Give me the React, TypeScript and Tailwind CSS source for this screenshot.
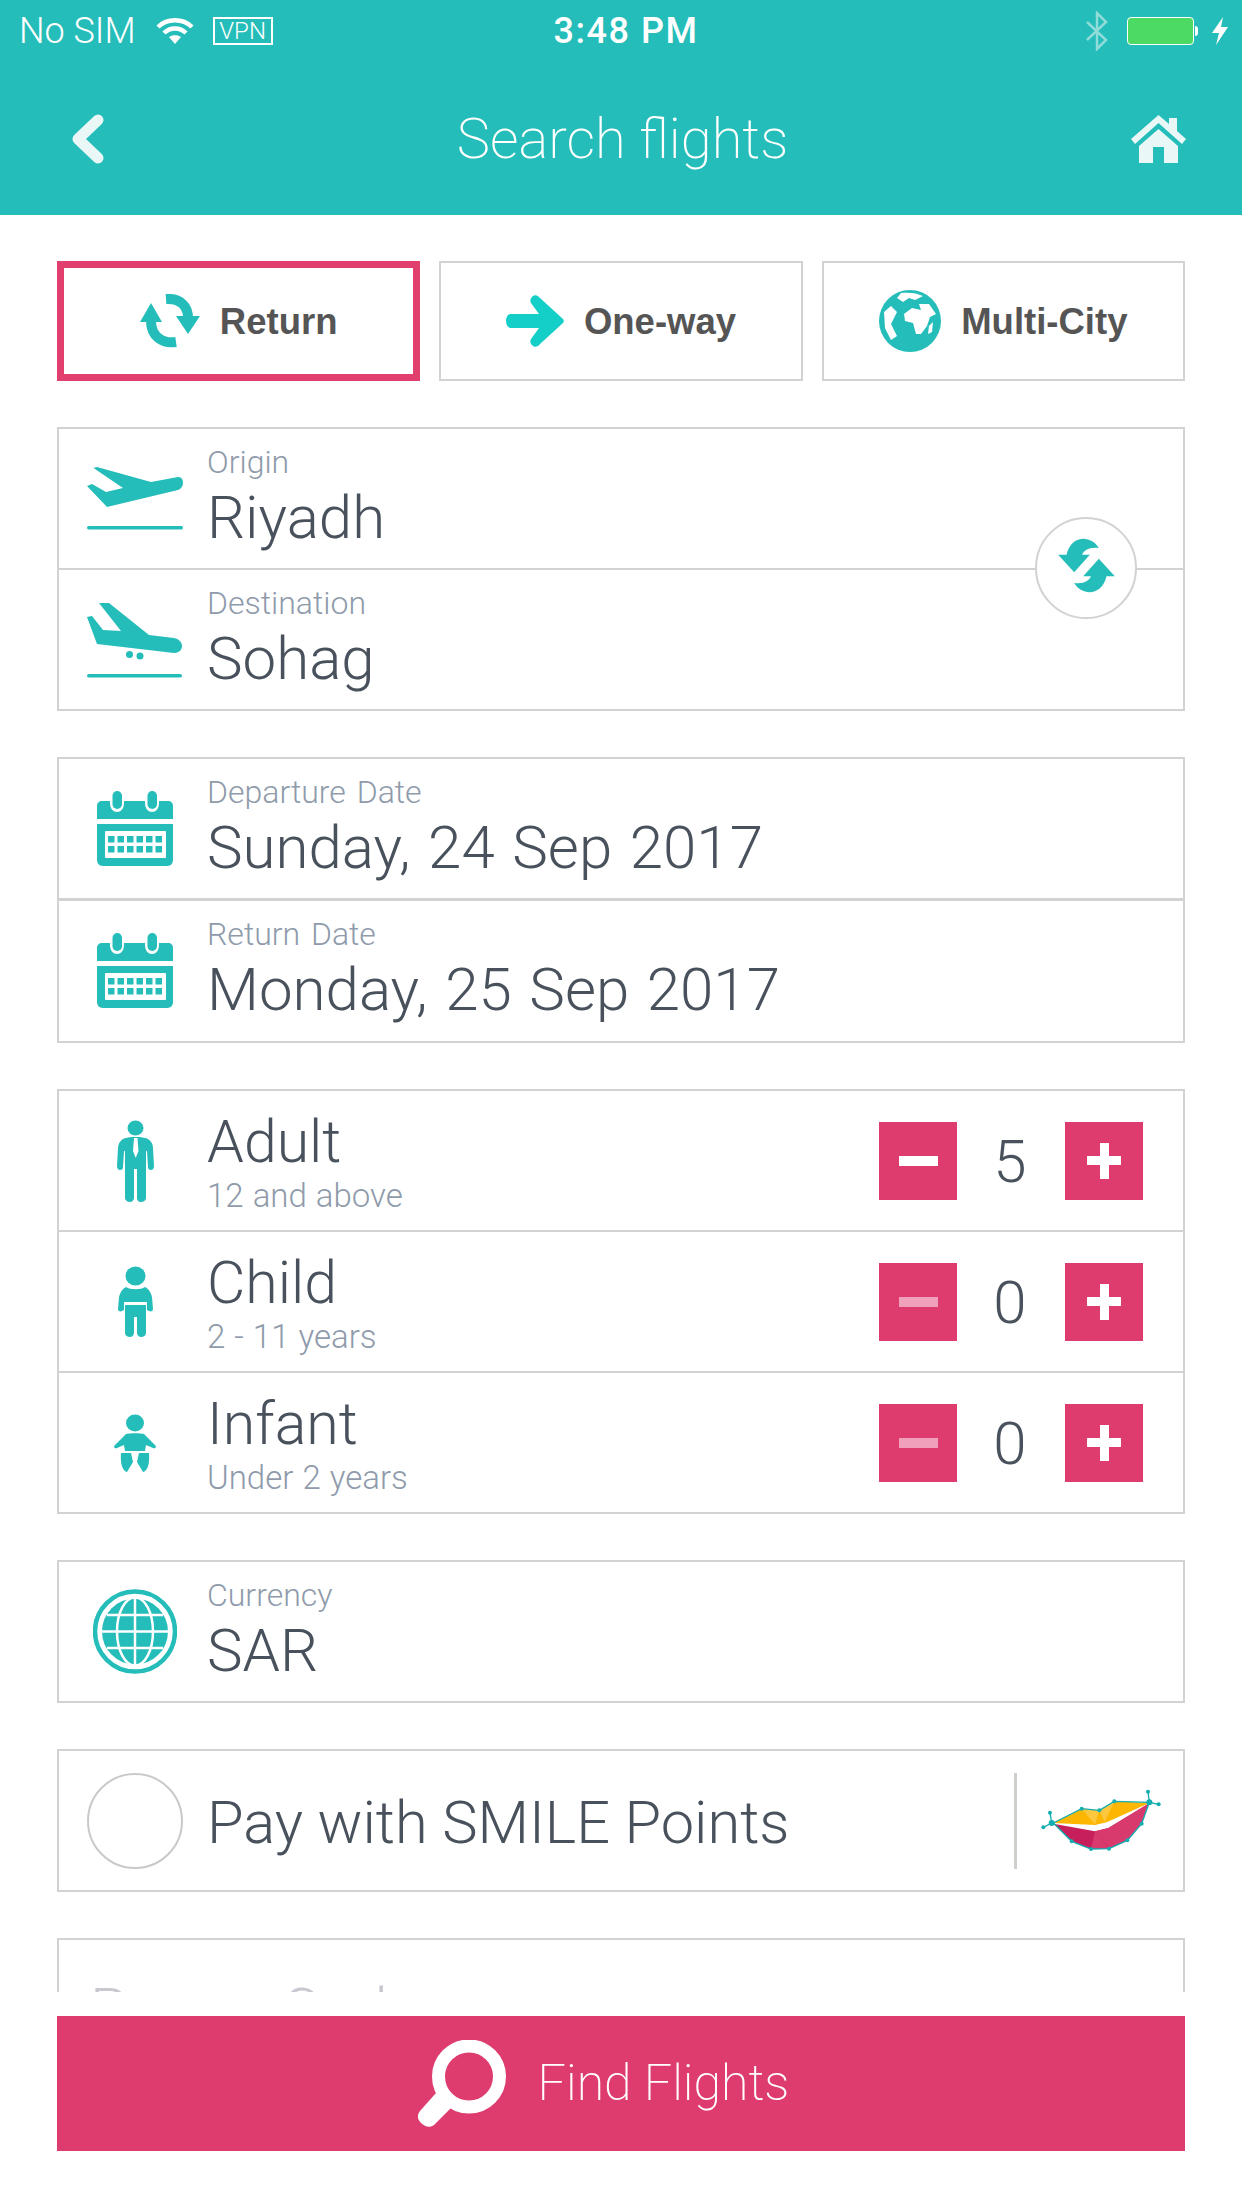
import type { ReactNode } from "react";

const TEAL = "#25bdb9";

function WifiIcon() {
  return (
    <svg width="38" height="28" viewBox="0 0 38 28" fill="none" stroke="#fff" strokeWidth="4.500">
      <path d="M2 10 C11 1 27 1 36 10" />
      <path d="M8 16 C14 10 24 10 30 16" />
      <path d="M19 27 L13 20 C16 17.500 22 17.500 25 20 Z" fill="#fff" stroke="none" />
    </svg>
  );
}

function BluetoothIcon() {
  return (
    <svg width="24" height="40" viewBox="0 0 24 40" fill="none" stroke="#8fdcd9" strokeWidth="2.500">
      <path d="M2 11 L21 29 L12 38 L12 2 L21 11 L2 29" />
    </svg>
  );
}

function BoltIcon() {
  return (
    <svg width="16" height="28" viewBox="0 0 16 28" fill="#fff">
      <path d="M11 0 L0 16 L7 16 L4 28 L16 10 L9 10 Z" />
    </svg>
  );
}

function ChevronIcon() {
  return (
    <svg width="33" height="50" viewBox="0 0 33 50" fill="none" stroke="#e9f8f7" strokeWidth="11" strokeLinecap="round" strokeLinejoin="round">
      <path d="M27 6 L7 25 L27 44" />
    </svg>
  );
}

function HomeIcon() {
  return (
    <svg width="55" height="48" viewBox="0 0 55 48" fill="#e9f8f7">
      <path d="M27.500 0 L38 9 L38 3 L46 3 L46 16 L55 24 L51 29 L27.500 8 L4 29 L0 24 Z" />
      <path d="M8 31 L27.500 14 L47 31 L47 48 L33 48 L33 32 L22 32 L22 48 L8 48 Z" />
    </svg>
  );
}

function ReturnIcon() {
  return (
    <svg width="60" height="54" viewBox="0 0 60 54" fill="none" stroke={TEAL} strokeWidth="10">
      <path d="M26 5 C40 4 48 12 48 24" />
      <path d="M36 22 L60 22 L48 40 Z" fill={TEAL} stroke="none" />
      <path d="M36 48 C22 50 11 42 11 27" />
      <path d="M0 28 L22 28 L11 9 Z" fill={TEAL} stroke="none" />
    </svg>
  );
}

function ArrowIcon() {
  return (
    <svg width="58" height="52" viewBox="0 0 58 52" fill="#14cfc8">
      <path d="M26 2 C28 -1 32 0 34 3 L57 24 C58 25 58 27 57 28 L34 49 C32 52 28 53 26 50 C24 48 24 46 25 44 L33 33 L5 33 C2 33 0 30 0 26 C0 22 2 19 5 19 L33 19 L25 8 C24 6 24 4 26 2 Z" />
    </svg>
  );
}

function EarthIcon() {
  return (
    <svg width="62" height="62" viewBox="0 0 62 62">
      <circle cx="31" cy="31" r="31" fill={TEAL} />
      <path d="M22 3 C30 2 38 3 44 6 L36 10 L30 8 L24 12 L18 8 Z" fill="#fff" />
      <path d="M5 22 L12 16 L18 22 L12 34 L18 46 L12 50 L6 38 Z" fill="#fff" />
      <path d="M25 24 L33 18 L42 20 L40 14 L50 14 L57 24 L51 27 L48 36 L42 44 L37 44 L34 33 L26 31 Z" fill="#fff" />
      <path d="M50 36 L54 32 L53 42 L49 44 Z" fill="#fff" />
    </svg>
  );
}

function TakeoffIcon() {
  return (
    <svg width="96" height="64" viewBox="0 0 96 64" fill={TEAL}>
      <path d="M6.500 1 L10 0 L64 15 L91 10 C95 10 96 13 96 16 C96 19 94 22 91 23 L20 40 L0 19 L5 17 L19 25 L36 21 Z" />
      <rect x="0" y="59" width="96" height="3.500" rx="1.700" />
    </svg>
  );
}

function LandingIcon() {
  return (
    <svg width="96" height="76" viewBox="0 0 96 76" fill={TEAL}>
      <path d="M12 1 L22 1 L62 33 L87 36 C92 37 95 40 95 44 C95 48 92 51 87 51 L10 42 L0 15 L5 14 L16 28 L34 29 Z" />
      <circle cx="42.500" cy="52.600" r="3.500" />
      <circle cx="53" cy="54" r="3.500" />
      <rect x="0" y="72" width="95" height="3.500" rx="1.700" />
    </svg>
  );
}

function CalendarIcon() {
  const cols = [11, 20.500, 30, 39.500, 49, 58.500];
  return (
    <svg width="76" height="75" viewBox="0 0 76 75">
      <path d="M5 10 L71 10 C74 10 76 12 76 15 L76 28 L0 28 L0 15 C0 12 2 10 5 10 Z" fill={TEAL} />
      <path d="M0 33 L76 33 L76 69 C76 72 74 75 70 75 L6 75 C2 75 0 72 0 69 Z" fill={TEAL} />
      <rect x="8" y="40" width="61" height="27" rx="1" fill="#fff" />
      {cols.map((x) => (
        <g key={x} fill={TEAL}>
          <rect x={x} y="45" width="6.500" height="6.500" />
          <rect x={x} y="55" width="6.500" height="6.500" />
        </g>
      ))}
      <path d="M13 12 C13 24 27 24 27 12 L27 10 L13 10 Z" fill="#fff" />
      <path d="M48 12 C48 24 62 24 62 12 L62 10 L48 10 Z" fill="#fff" />
      <rect x="15.500" y="0" width="9.500" height="18" rx="4.700" fill={TEAL} />
      <rect x="50.500" y="0" width="9.500" height="18" rx="4.700" fill={TEAL} />
    </svg>
  );
}

function AdultIcon() {
  return (
    <svg width="37" height="82" viewBox="0 0 37 82" fill={TEAL}>
      <ellipse cx="18.500" cy="8" rx="8" ry="7.500" />
      <path d="M6 19 C8 18 12 17 15 17 L22 17 C25 17 29 18 31 19 C34 21 36 24 36 28 L37 46 C37 48 36 50 34 50 C32 50 31 49 31 47 L30 31 L29 31 L29 78 C29 80 27 82 24 82 C21 82 20 80 20 78 L20 49 L17 49 L17 78 C17 80 15 82 13 82 C10 82 8 80 8 78 L8 31 L7 31 L6 47 C6 49 5 50 3 50 C1 50 0 48 0 46 L1 28 C1 24 3 21 6 19 Z" />
      <path d="M17 18 L20.500 18 L21.500 31 L18.700 38 L16 31 Z" fill="#fff" />
    </svg>
  );
}

function ChildIcon() {
  return (
    <svg width="35" height="71" viewBox="0 0 35 71" fill={TEAL}>
      <ellipse cx="17.500" cy="10" rx="10" ry="9.500" />
      <path d="M8 21 C12 24 23 24 27 21 C31 23 33 27 34 31 L35 43 C35 45 33 46 31 45 L29 44 L29 36 L6 36 L6 44 L4 45 C2 46 0 45 0 43 L1 31 C2 27 4 23 8 21 Z" />
      <path d="M7 39 L28 39 L28 67 C28 69 26 71 23 71 C21 71 19 69 19 67 L19 51 L16 51 L16 67 C16 69 14 71 12 71 C9 71 7 69 7 67 Z" />
    </svg>
  );
}

function InfantIcon() {
  return (
    <svg width="42" height="58" viewBox="0 0 42 58" fill={TEAL}>
      <ellipse cx="21" cy="9" rx="9" ry="8.500" />
      <path d="M12 20 C16 19 26 19 30 20 L41 31 C43 33 41 35 39 34 L32 31 L31 37 L11 37 L10 31 L3 34 C1 35 -1 33 1 31 Z" />
      <path d="M7 39 L17 39 L19 48 L13 58 C9 57 6 51 7 39 Z" />
      <path d="M35 39 L25 39 L23 48 L29 58 C33 57 36 51 35 39 Z" />
    </svg>
  );
}

function GridGlobeIcon() {
  return (
    <svg width="84" height="85" viewBox="0 0 84 85" fill="none">
      <circle cx="42" cy="42.500" r="40" stroke={TEAL} strokeWidth="4.500" />
      <circle cx="42" cy="42.500" r="33" fill={TEAL} />
      <g stroke="#fff" strokeWidth="2.500">
        <path d="M42 8 L42 77" />
        <ellipse cx="42" cy="42.500" rx="18" ry="34" />
        <path d="M9 42.500 L75 42.500" />
        <path d="M14 26 L70 26" />
        <path d="M14 59 L70 59" />
      </g>
    </svg>
  );
}

function SwapIcon() {
  const arrow = "M122 30 C100 -8 40 -12 25 50 L0 50 L48 103 L95 50 L72 50 C75 38 95 25 122 30 Z";
  return (
    <svg className="mb-[5px]" width="57" height="55" viewBox="0 0 170 165" fill={TEAL}>
      <path d={arrow} />
      <path d={arrow} transform="rotate(180 85 82.500)" />
    </svg>
  );
}

function SmileLogo() {
  const dots = [
    [250, 323], [270, 279], [275, 310], [335, 365], [393, 388], [447, 387],
    [502, 362], [545, 312], [568, 248], [564, 216], [596, 254], [463, 245],
    [418, 272], [365, 267],
  ];
  return (
    <svg width="123" height="63" viewBox="243 208 369 189">
      <path d="M280 310 L365 267 L418 272 L463 245 L568 250 L440 308 L405 316 Z" fill="#fdb702" />
      <path d="M365 267 L418 272 L405 314 Z M418 272 L463 245 L434 308 Z" fill="#fdc840" />
      <path d="M280 312 L405 335 L445 325 L565 252 L545 312 L502 362 L447 387 L393 388 L335 365 Z" fill="#c61f5b" />
      <path d="M405 335 L445 325 L565 252 L545 312 L502 362 L447 385 Z M405 335 L393 388 L447 387 Z" fill="#d83a6e" />
      <path d="M280 310 L365 267 L418 272 L463 245 L568 248 L545 312 L502 362 L447 387 L393 388 L335 365 Z" fill="none" stroke="#12aeb0" strokeWidth="4" />
      <path d="M250 323 L275 310 L270 279 M564 216 L568 248 L596 254" fill="none" stroke="#12aeb0" strokeWidth="4" />
      {dots.map(([x, y]) => (
        <circle key={`${x}-${y}`} cx={x} cy={y} r="6" fill="#12aeb0" />
      ))}
      <circle cx="275" cy="310" r="9" fill="#12aeb0" />
      <circle cx="568" cy="248" r="9" fill="#12aeb0" />
    </svg>
  );
}

function SearchIcon() {
  return (
    <svg width="89" height="87" viewBox="0 0 89 87" fill="#fff">
      <circle cx="52" cy="36.500" r="30.500" fill="none" stroke="#fff" strokeWidth="13" />
      <path d="M19 53 L34 68 L17 85 C13 88 8 87 4 83 C0 79 0 75 3 71 Z" />
    </svg>
  );
}

function Tab({ icon, label, active }: { icon: ReactNode; label: string; active?: boolean }) {
  return (
    <div
      className={`flex h-[120px] min-w-0 items-center justify-center gap-[20px] ${
        active ? "border-[7px] border-[#e13f6e]" : "border-2 border-[#d2d2d2]"
      }`}
    >
      {icon}
      <span className="pt-[2px] font-['Liberation_Sans',sans-serif] text-[36.500px] font-bold text-[#555555]">{label}</span>
    </div>
  );
}

function Row({ icon, children, divider, thick }: { icon: ReactNode; children: ReactNode; divider?: boolean; thick?: boolean }) {
  const line = thick ? "box-content border-t-[3px] border-[#d2d2d2]" : divider ? "box-content border-t-2 border-[#d2d2d2]" : "";
  return (
    <div className={`flex h-[139px] items-center ${line}`}>
      <div className="flex w-[148px] shrink-0 items-center justify-center pl-[4px]">{icon}</div>
      <div className="min-w-0 flex-1">{children}</div>
    </div>
  );
}

function Field({ label, value }: { label: string; value: string }) {
  return (
    <div className="pb-[3px] [word-spacing:3px]">
      <div className="text-[32px] leading-[42px] font-light text-[#8f9bab]">{label}</div>
      <div className="text-[60px] leading-[70px] font-light text-[#49525c]">{value}</div>
    </div>
  );
}

function Passenger({ icon, name, note, count, divider }: { icon: ReactNode; name: string; note: string; count: number; divider?: boolean }) {
  return (
    <Row icon={icon} divider={divider}>
      <div className="flex items-center justify-between pr-[40px]">
        <div className="pb-[2px]">
          <div className="text-[59px] leading-[72px] font-light text-[#49525c]">{name}</div>
          <div className="text-[33px] leading-[36px] font-light text-[#8f9bab] [word-spacing:1px]">{note}</div>
        </div>
        <div className="flex items-center">
          <div className="flex h-[78px] w-[78px] items-center justify-center bg-[#de3b6e]">
            <div className={`h-[10px] w-[39px] ${count > 0 ? "bg-white" : "bg-[#f0a0ba]"}`} />
          </div>
          <div className="w-[108px] pt-[3px] pr-[2px] text-center text-[60px] leading-none font-light text-[#49525c]">{count}</div>
          <div className="relative flex h-[78px] w-[78px] items-center justify-center bg-[#de3b6e]">
            <div className="h-[9px] w-[34px] bg-white" />
            <div className="absolute h-[36px] w-[9px] bg-white" />
          </div>
        </div>
      </div>
    </Row>
  );
}

function Card({ children, className = "" }: { children: ReactNode; className?: string }) {
  return <div className={`relative border-2 border-[#d2d2d2] ${className}`}>{children}</div>;
}

export default function App() {
  return (
    <div className="flex h-[2208px] w-[1242px] flex-col overflow-hidden bg-white font-['Roboto',sans-serif]">
      <header className="h-[215px] shrink-0 bg-[#25bdb9] text-white">
        <div className="grid h-[62px] grid-cols-[1fr_auto_1fr] items-center pr-[14px] pl-[19px]">
          <div className="flex items-center">
            <span className="text-[36px] font-light">No SIM</span>
            <span className="ml-[20px]"><WifiIcon /></span>
            <span className="ml-[19px] flex h-[28px] w-[60px] items-center justify-center border-2 border-white text-[24px] leading-none font-light">VPN</span>
          </div>
          <div className="pl-[5px] text-[36px] font-medium tracking-[1.500px]">3:48 PM</div>
          <div className="flex items-center justify-end">
            <BluetoothIcon />
            <div className="ml-[18px] flex items-center gap-[1px]">
              <div className="h-[28px] w-[67px] rounded-[4px] border border-white bg-[#4cd964]" />
              <div className="h-[10px] w-[3px] rounded-r bg-white" />
            </div>
            <span className="ml-[14px]"><BoltIcon /></span>
          </div>
        </div>
        <div className="grid h-[153px] grid-cols-[1fr_auto_1fr] items-center pr-[56px] pl-[71px]">
          <ChevronIcon />
          <h1 className="mr-[12px] text-[56px] font-extralight">Search flights</h1>
          <div className="flex justify-end"><HomeIcon /></div>
        </div>
      </header>

      <div className="flex h-[1777px] shrink-0 flex-col gap-[46px] overflow-hidden px-[57px] pt-[46px]">
        <div className="grid grid-cols-3 gap-[19px]">
          <Tab icon={<ReturnIcon />} label="Return" active />
          <Tab icon={<ArrowIcon />} label="One-way" />
          <Tab icon={<EarthIcon />} label="Multi-City" />
        </div>

        <Card>
          <Row icon={<TakeoffIcon />}><Field label="Origin" value="Riyadh" /></Row>
          <Row icon={<LandingIcon />} divider><Field label="Destination" value="Sohag" /></Row>
          <div className="absolute top-[88px] right-[46px] flex h-[102px] w-[102px] items-center justify-center rounded-full border-2 border-[#d2d2d2] bg-white">
            <SwapIcon />
          </div>
        </Card>

        <Card className="pb-[1px]">
          <Row icon={<CalendarIcon />}><Field label="Departure Date" value="Sunday, 24 Sep 2017" /></Row>
          <Row icon={<CalendarIcon />} thick><Field label="Return Date" value="Monday, 25 Sep 2017" /></Row>
        </Card>

        <Card>
          <Passenger icon={<AdultIcon />} name="Adult" note="12 and above" count={5} />
          <Passenger icon={<ChildIcon />} name="Child" note="2 - 11 years" count={0} divider />
          <Passenger icon={<InfantIcon />} name="Infant" note="Under 2 years" count={0} divider />
        </Card>

        <Card>
          <Row icon={<GridGlobeIcon />}><Field label="Currency" value="SAR" /></Row>
        </Card>

        <Card>
          <Row icon={<div className="h-[96px] w-[96px] rounded-full border-2 border-[#c9c9c9]" />}>
            <div className="flex items-center justify-between">
              <span className="pt-[6px] text-[59.500px] font-light text-[#49525c]">Pay with SMILE Points</span>
              <div className="flex items-center">
                <div className="h-[96px] w-[3px] bg-[#cfcfcb]" />
                <div className="mr-[19px] ml-[24px]"><SmileLogo /></div>
              </div>
            </div>
          </Row>
        </Card>

        <Card>
          <div className="flex h-[139px] items-center pl-[31px] text-[60px] font-light text-[#c8c8d0]">Promo Code</div>
        </Card>
      </div>

      <div className="px-[57px] pt-[24px]">
        <button type="button" className="flex h-[135px] w-full items-center justify-center gap-[32px] bg-[#de3b6e] pr-[36px] text-white">
          <SearchIcon />
          <span className="text-[50px] font-extralight">Find Flights</span>
        </button>
      </div>
    </div>
  );
}
